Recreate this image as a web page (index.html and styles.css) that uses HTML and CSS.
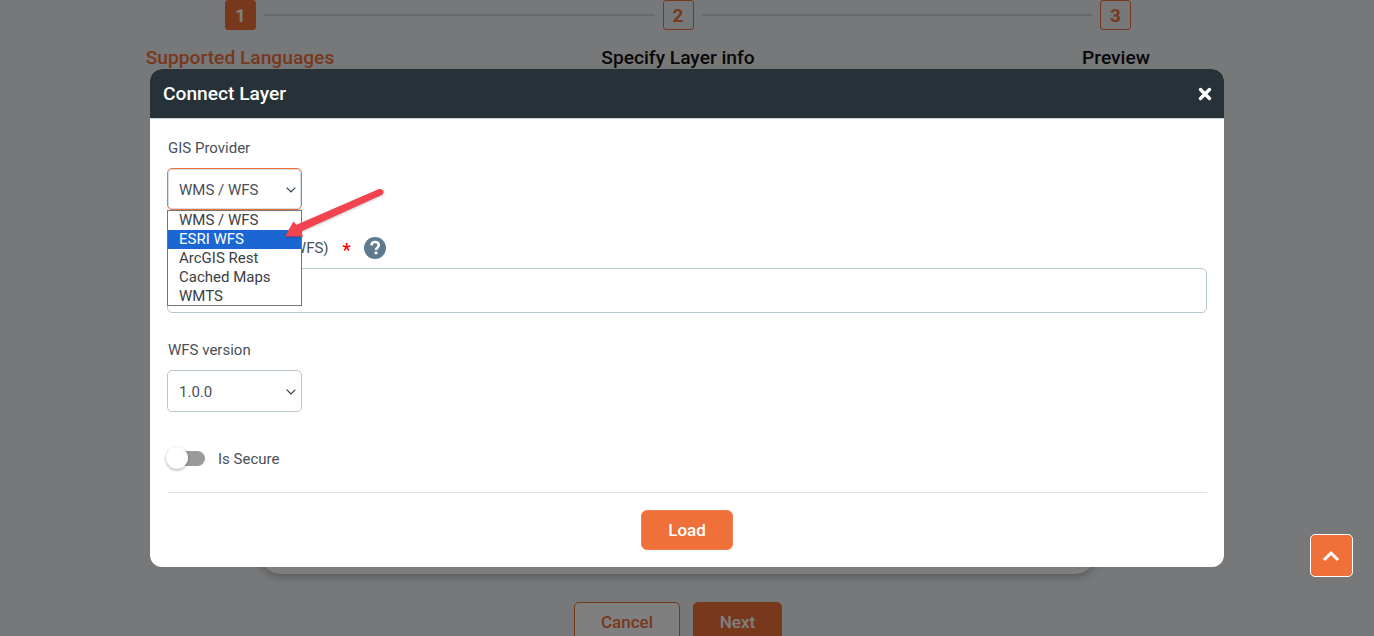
FILE: index.html
```html
<!DOCTYPE html>
<html lang="en">
<head>
  <meta charset="UTF-8">
  <title>Connect Layer</title>
  <meta name="viewport" content="width=device-width, initial-scale=1.0">
  <link rel="stylesheet" href="styles.css">
</head>
<body>

  <!-- Page behind the dialog -->
  <div class="page">
    <div class="step-track">
      <span class="step-box active">1</span>
      <span class="step-line"></span>
      <span class="step-box">2</span>
      <span class="step-line"></span>
      <span class="step-box">3</span>
    </div>
    <div class="step-labels">
      <span class="step-label active">Supported Languages</span>
      <span class="step-label">Specify Layer info</span>
      <span class="step-label">Preview</span>
    </div>
    <div class="panel"></div>
    <div class="actions">
      <button class="btn-outline">Cancel</button>
      <button class="btn-solid">Next</button>
    </div>
  </div>

  <div class="backdrop">
    <div class="modal">
      <div class="modal-header">
        <h2>Connect Layer</h2>
        <svg class="close-icon" width="14" height="14" viewBox="0 0 14 14">
          <path d="M2.5 2.5 L11.5 11.5 M11.5 2.5 L2.5 11.5" stroke="#fff" stroke-width="3.4" stroke-linecap="round"/>
        </svg>
      </div>

      <div class="modal-body">
        <div class="field provider-field">
          <label class="field-label">GIS Provider</label>
          <div class="select focused">
            <span>WMS / WFS</span>
            <svg class="chevron" width="10" height="6" viewBox="0 0 10 6"><path d="M0.7 0.7 L5 5 L9.3 0.7" fill="none" stroke="#343a40" stroke-width="1.2"/></svg>
          </div>
          <ul class="select-menu">
            <li>WMS / WFS</li>
            <li class="selected">ESRI WFS</li>
            <li>ArcGIS Rest</li>
            <li>Cached Maps</li>
            <li>WMTS</li>
          </ul>
        </div>

        <div class="field url-field">
          <div class="label-row">
            <label class="field-label">Layer URL (WMS / WFS)</label>
            <span class="required">*</span>
            <svg class="help-icon" width="22" height="22" viewBox="0 0 22 22">
              <circle cx="11" cy="11" r="11" fill="#5d7b8d"/>
              <path d="M7.4 8.4 C7.5 6.2 9.1 5 11.1 5 C13.2 5 14.8 6.3 14.8 8.1 C14.8 10.6 12 10.7 12 12.9" fill="none" stroke="#fff" stroke-width="2.6"/>
              <rect x="10.6" y="14.4" width="2.9" height="2.9" rx="0.5" fill="#fff"/>
            </svg>
          </div>
          <div class="text-input"></div>
        </div>

        <div class="field version-field">
          <label class="field-label">WFS version</label>
          <div class="select">
            <span>1.0.0</span>
            <svg class="chevron" width="10" height="6" viewBox="0 0 10 6"><path d="M0.7 0.7 L5 5 L9.3 0.7" fill="none" stroke="#343a40" stroke-width="1.2"/></svg>
          </div>
        </div>

        <div class="toggle-row">
          <span class="toggle"><span class="toggle-knob"></span></span>
          <span class="toggle-label">Is Secure</span>
        </div>

        <div class="modal-footer">
          <button class="btn-load">Load</button>
        </div>
      </div>

      <!-- Red annotation arrow drawn on the screenshot -->
      <svg class="annotation" width="110" height="60" viewBox="0 0 110 60">
        <path d="M99 4 Q104 3.8 103.5 7.5 Q103 9.4 101 10.3 L21 46.5 L23 51.5 L5 51.5 L13.5 36.5 L16.5 39.8 Z" fill="#f2434f"/>
      </svg>
    </div>
  </div>

  <button class="scroll-top">
    <svg width="18" height="12" viewBox="0 0 18 12"><path d="M2 10 L9 3 L16 10" fill="none" stroke="#fff" stroke-width="3"/></svg>
  </button>

</body>
</html>
```

FILE: styles.css
```css
* {
  box-sizing: border-box;
}

html, body {
  height: 636px;
  overflow: hidden;
}

body {
  font-family: Roboto, sans-serif;
  background: #edf0f4;
  color: #212529;
  margin: 0;
  padding: 0;
}

.page {
  width: 1356px;
}

.step-track {
  display: flex;
  align-items: center;
  padding: 0 225px;
}

.step-box {
  width: 31px;
  height: 30px;
  flex: none;
  display: flex;
  align-items: center;
  justify-content: center;
  border: 1px solid #ef7039;
  border-radius: 3px;
  color: #ef7039;
  font-size: 19px;
  font-weight: 700;
}

.step-box.active {
  background: #ef7039;
  color: #fff;
}

.step-line {
  flex: 1;
  height: 2px;
  margin: 0 8px;
  background: #ced4da;
}

.step-labels {
  display: flex;
  justify-content: space-between;
  padding: 17px 145px 0;
  line-height: 22px;
}

.step-label {
  width: 190px;
  text-align: center;
  font-size: 19.2px;
  font-weight: 500;
  white-space: nowrap;
  color: #111;
}

.step-label.active {
  color: #ef7039;
}

.panel {
  width: 840px;
  height: 503px;
  margin: 2px auto 0;
  background: #fff;
  border-radius: 24px;
  box-shadow: 0 3px 8px rgba(0, 0, 0, 0.25);
}

.actions {
  display: flex;
  justify-content: center;
  gap: 13px;
  margin-top: 28px;
}

.actions button {
  height: 40px;
  border-radius: 5px;
  font-family: inherit;
  font-size: 17px;
  font-weight: 500;
}

.btn-outline {
  width: 106px;
  background: #fff;
  border: 1px solid #ef7039;
  color: #ef7039;
}

.btn-solid {
  width: 89px;
  background: #ef7039;
  border: 1px solid #ef7039;
  color: #fff;
}

.backdrop {
  position: fixed;
  top: 0;
  left: 0;
  right: 0;
  bottom: 0;
  padding-top: 69px;
  background: rgba(0, 0, 0, 0.5);
  display: flex;
  justify-content: center;
  align-items: flex-start;
}

.modal {
  position: relative;
  width: 1074px;
  height: 498px;
  background: #fff;
  border-radius: 12px;
  overflow: hidden;
}

.modal-header {
  height: 50px;
  padding: 0 12px 0 13px;
  background: #263238;
  border-bottom: 1px solid #cfd6dc;
  display: flex;
  align-items: center;
  justify-content: space-between;
}

.modal-header h2 {
  margin: 0;
  font-size: 19.2px;
  font-weight: 500;
  color: #fff;
}

.modal-body {
  padding: 20px 17px 0 17px;
}

.field {
  position: relative;
}

.field-label {
  display: block;
  padding-left: 1px;
  font-size: 15px;
  line-height: 18px;
  color: #495057;
}

.select {
  width: 135px;
  height: 42px;
  margin-top: 11px;
  padding: 1px 5px 0 11px;
  display: flex;
  align-items: center;
  justify-content: space-between;
  background: #fff;
  border: 1px solid #b9c7d1;
  border-radius: 5px;
  font-size: 15px;
  color: #495057;
}

.select.focused {
  border-color: #ef7039;
  box-shadow: inset 0 0 0 1px #d5dee5;
}

.select-menu {
  position: absolute;
  top: 71px;
  left: 0;
  z-index: 2;
  width: 135px;
  height: 96px;
  margin: 0;
  padding: 0;
  list-style: none;
  background: #fff;
  border: 1px solid #767676;
  font-size: 15px;
  color: #3c4043;
}

.select-menu li {
  height: 19px;
  line-height: 19px;
  padding-left: 11px;
}

.select-menu li.selected {
  background: #1a66d2;
  color: #fff;
}

.url-field {
  margin-top: 27px;
}

.label-row {
  display: flex;
  align-items: center;
  height: 22px;
}

.required {
  margin-left: 14px;
  padding-top: 4px;
  color: #f00;
  font-size: 18px;
  line-height: 22px;
  font-weight: 700;
}

.help-icon {
  margin-left: 13px;
}

.text-input {
  height: 45px;
  margin-top: 9px;
  border: 1px solid #b9c7d1;
  border-radius: 5px;
}

.version-field {
  margin-top: 28px;
}

.toggle-row {
  display: flex;
  align-items: center;
  margin-top: 35px;
  height: 22px;
}

.toggle {
  position: relative;
  width: 37px;
  height: 15px;
  margin-left: 1px;
  background: #9a9a9a;
  border-radius: 8px;
}

.toggle-knob {
  position: absolute;
  top: -4px;
  left: -2px;
  width: 22px;
  height: 22px;
  background: #fff;
  border-radius: 50%;
  box-shadow: 0 1px 3px rgba(0, 0, 0, 0.35);
}

.toggle-label {
  margin-left: 13px;
  padding-top: 1px;
  font-size: 15px;
  color: #495057;
}

.modal-footer {
  margin-top: 23px;
  margin-left: 1px;
  padding-top: 17px;
  border-top: 1px solid #e3e3ec;
  display: flex;
  justify-content: center;
}

.btn-load {
  width: 92px;
  height: 40px;
  margin-left: -1px;
  background: #ef7039;
  border: 1px solid #f08050;
  border-radius: 6px;
  color: #fff;
  font-family: inherit;
  font-size: 17px;
  font-weight: 500;
}

.annotation {
  position: absolute;
  left: 130px;
  top: 116px;
  z-index: 3;
  filter: drop-shadow(0 1px 1px rgba(0, 0, 0, 0.25));
}

.scroll-top {
  position: fixed;
  left: 1310px;
  top: 534px;
  width: 43px;
  height: 43px;
  padding: 0 1px 0 0;
  background: #ef7039;
  border: 1px solid #fff;
  border-radius: 5px;
  display: flex;
  align-items: center;
  justify-content: center;
}
```
